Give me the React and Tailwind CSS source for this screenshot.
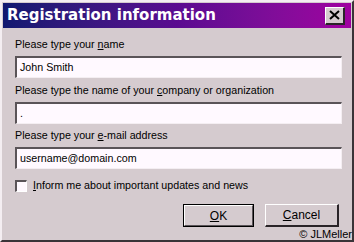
export default function App() {
  const label = "text-[10.7px] leading-[13px] text-black";
  const box =
    "h-[22px] bg-[#fff9ff] border-t-2 border-l-2 border-t-[#5a5458] border-l-[#5a5458] border-b border-r border-b-[#f4eef2] border-r-[#f4eef2] flex items-center px-[3px] text-[10.7px] text-black";
  return (
    <div
      className="w-[354px] h-[242px] bg-[#d5cbcf] relative overflow-hidden"
      style={{ fontFamily: '"Liberation Sans", Arial, sans-serif' }}
    >
      <div className="absolute inset-0 border-t-2 border-l-2 border-t-[#f4eef2] border-l-[#f4eef2] border-b-2 border-r-2 border-b-[#3a3438] border-r-[#3a3438] pointer-events-none" />
      <div className="flex flex-col h-full px-[3px] pt-[3px]">
        <div className="h-[25px] flex items-center justify-between pl-[4px] pr-[6px] bg-gradient-to-r from-[#101870] via-[#5a0a90] to-[#a000a0]">
          <span
            className="text-white font-bold text-[15px] leading-none"
            style={{ fontFamily: '"Comic Sans MS", "DejaVu Sans", sans-serif' }}
          >
            Registration information
          </span>
          <div className="w-[20px] h-[18px] bg-[#d5cbcf] border-t border-l border-t-white border-l-white border-b-2 border-r-2 border-b-[#2a2428] border-r-[#2a2428] flex items-center justify-center">
            <svg width="11" height="10" viewBox="0 0 11 10">
              <path d="M1 1 L10 9 M10 1 L1 9" stroke="#000" strokeWidth="2" />
            </svg>
          </div>
        </div>
        <div className="flex flex-col pl-[12px] pr-[9px] pt-[10px]">
          <div className={label}>
            Please type your <u>n</u>ame
          </div>
          <div className={`${box} mt-[5px]`}>John Smith</div>
          <div className={`${label} mt-[6px]`}>
            Please type the name of your <u>c</u>ompany or organization
          </div>
          <div className={`${box} mt-[5px]`}>.</div>
          <div className={`${label} mt-[5px]`}>
            Please type your <u>e</u>-mail address
          </div>
          <div className={`${box} mt-[5px]`}>username@domain.com</div>
          <div className="flex items-center gap-[6px] mt-[10px]">
            <div className="w-[12px] h-[12px] bg-[#fff9ff] border-t-2 border-l-2 border-t-[#5a5458] border-l-[#5a5458] border-b border-r border-b-white border-r-white" />
            <span className="text-[10.7px] leading-[13px] text-black">
              <u>I</u>nform me about important updates and news
            </span>
          </div>
          <div className="flex justify-end gap-[11px] mt-[12px] pr-[3px]">
            <div className="w-[71px] h-[23px] border border-black">
              <div className="w-full h-full border-t border-l border-t-white border-l-white border-b border-r border-b-[#5a5458] border-r-[#5a5458] flex items-center justify-center text-[12px]">
                <span><u>O</u>K</span>
              </div>
            </div>
            <div className="w-[74px] h-[23px] border-t border-l border-t-white border-l-white border-b-2 border-r-2 border-b-[#2a2428] border-r-[#2a2428] flex items-center justify-center text-[12px]">
              <span><u>C</u>ancel</span>
            </div>
          </div>
        </div>
        <div className="absolute right-[2px] bottom-[2px] text-[11px] leading-none text-black">
          © JLMeller
        </div>
      </div>
    </div>
  );
}
